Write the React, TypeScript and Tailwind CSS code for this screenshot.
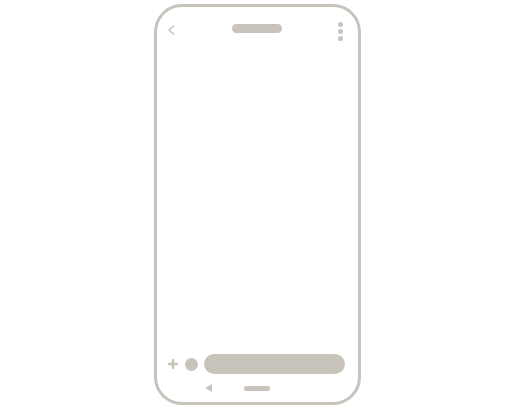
export default function App() {
  return (
    <div className="w-[515px] h-[410px] bg-white overflow-hidden">
      <div className="ml-[154px] mt-[4px] w-[207px] h-[401px] border-[3px] border-[#c8c4bc] rounded-[28px] flex flex-col">
        {/* top bar */}
        <div className="mt-[15px] flex items-start justify-between pl-[10px] pr-[15px]">
          <svg className="mt-[3px]" width="8" height="10" viewBox="0 0 8 10" fill="none">
            <polyline points="6.5,1 2,5 6.5,9" stroke="#c8c4bc" strokeWidth="1.6" strokeLinecap="round" strokeLinejoin="round" />
          </svg>
          <div className="mt-[2px] w-[50px] h-[9px] rounded-full bg-[#c8c4bc]" />
          <div className="flex flex-col gap-[2px]">
            <div className="w-[5px] h-[5px] rounded-full bg-[#c8c4bc]" />
            <div className="w-[5px] h-[5px] rounded-full bg-[#c8c4bc]" />
            <div className="w-[5px] h-[5px] rounded-full bg-[#c8c4bc]" />
          </div>
        </div>

        <div className="flex-1" />

        {/* input row */}
        <div className="flex items-center h-[20px] pl-[11px] pr-[13px]">
          <svg width="10" height="10" viewBox="0 0 10 10">
            <rect x="0" y="3.75" width="10" height="2.5" rx="1" fill="#c8c4bc" />
            <rect x="3.75" y="0" width="2.5" height="10" rx="1" fill="#c8c4bc" />
          </svg>
          <div className="ml-[7px] w-[13px] h-[13px] rounded-full bg-[#c8c4bc]" />
          <div className="ml-[6px] flex-1 h-[20px] rounded-full bg-[#c8c4bc]" />
        </div>

        {/* nav row */}
        <div className="mt-[10px] mb-[10px] h-[8px] flex items-center pl-[48px]">
          <svg width="7" height="8" viewBox="0 0 7 8">
            <polygon points="7,0 0,4 7,8" fill="#c8c4bc" />
          </svg>
          <div className="ml-[32px] w-[26px] h-[5px] rounded-full bg-[#c8c4bc]" />
        </div>
      </div>
    </div>
  );
}
